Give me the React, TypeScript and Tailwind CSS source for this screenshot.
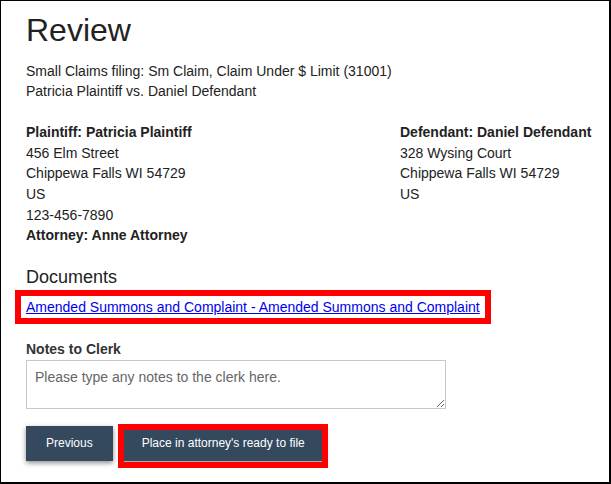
import React from "react";

export default function App() {
  return (
    <div
      className="w-[611px] h-[484px] box-border border-t border-l border-r-2 border-b-2 border-black bg-white pt-[12px] pl-[25px] text-[#222]"
      style={{ fontFamily: '"Liberation Sans", Arial, sans-serif' }}
    >
      <h1 className="text-[32px] leading-[35.2px] font-normal text-[#222]">Review</h1>

      <div className="mt-[13px] text-[14px] leading-[20px]">
        <div>Small Claims filing: Sm Claim, Claim Under $ Limit (31001)</div>
        <div>Patricia Plaintiff vs. Daniel Defendant</div>
      </div>

      <div className="mt-[21px] grid grid-cols-[374px_1fr] text-[14px] leading-[20.6px]">
        <div>
          <div className="font-bold">Plaintiff: Patricia Plaintiff</div>
          <div>456 Elm Street</div>
          <div>Chippewa Falls WI 54729</div>
          <div>US</div>
          <div>123-456-7890</div>
          <div className="font-bold">Attorney: Anne Attorney</div>
        </div>
        <div>
          <div className="font-bold">Defendant: Daniel Defendant</div>
          <div>328 Wysing Court</div>
          <div>Chippewa Falls WI 54729</div>
          <div>US</div>
        </div>
      </div>

      <h2 className="mt-[21px] text-[18px] leading-[20px] font-normal text-[#222]">Documents</h2>

      <div className="mt-[10px] text-[14px] leading-[20px]">
        <span className="relative inline-block">
          <a href="#" className="text-[#0000ee] underline">
            Amended Summons and Complaint - Amended Summons and Complaint
          </a>
          <span className="pointer-events-none absolute -left-[11px] -right-[11px] -top-[7px] -bottom-[7px] border-[6px] border-[#ff0000]" />
        </span>
      </div>

      <div className="mt-[22px] text-[14px] leading-[20px] font-bold text-[#333]">Notes to Clerk</div>
      <textarea
        className="mt-[1px] block w-[420px] h-[49px] border border-[#c8c8c8] px-[8px] py-[6px] text-[14px] leading-[20px] text-[#333] placeholder:text-[#666] outline-none"
        placeholder="Please type any notes to the clerk here."
        style={{ fontFamily: '"Liberation Sans", Arial, sans-serif' }}
      />

      <div className="mt-[17px] flex gap-[9px]">
        <button className="h-[35px] px-[20px] bg-[#34495e] text-white text-[12px] shadow-[0_2px_5px_rgba(0,0,0,0.45)]">
          Previous
        </button>
        <span className="relative inline-block">
          <button className="h-[35px] px-[20px] bg-[#34495e] text-white text-[12px] shadow-[0_2px_5px_rgba(0,0,0,0.45)]">
            Place in attorney's ready to file
          </button>
          <span className="pointer-events-none absolute -left-[4px] -right-[3px] -top-[2px] -bottom-[7px] border-[6px] border-[#ff0000]" />
        </span>
      </div>
    </div>
  );
}
